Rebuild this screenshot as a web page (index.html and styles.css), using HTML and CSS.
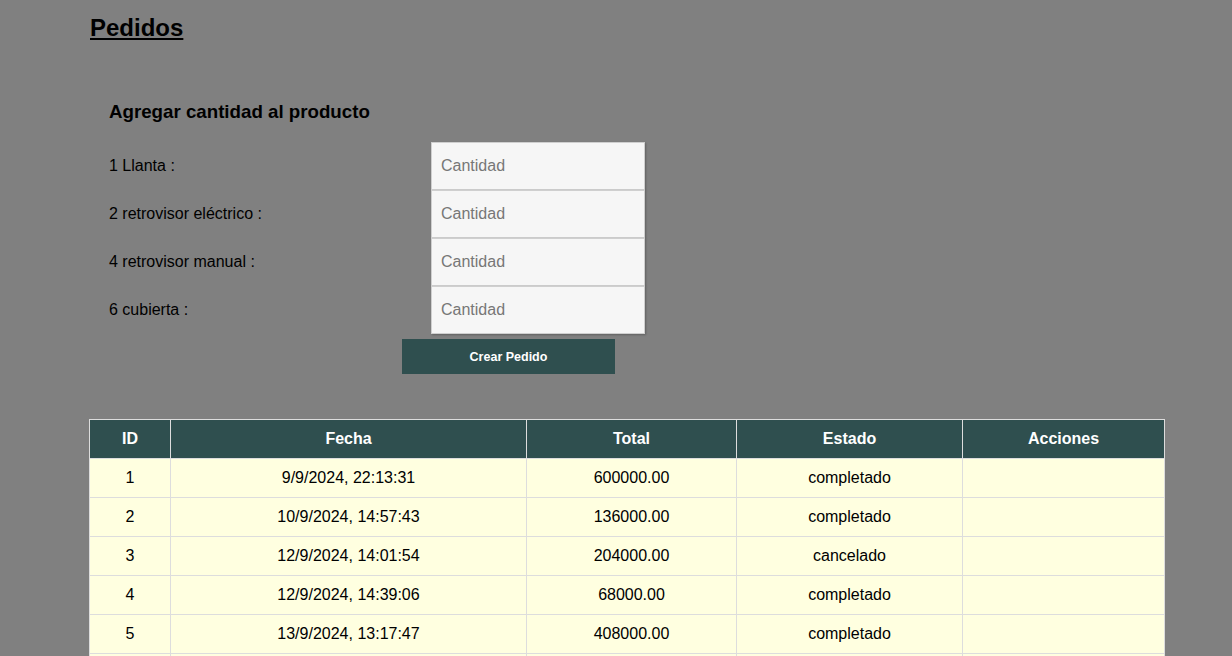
FILE: index.html
```html
<!DOCTYPE html>
<html lang="es">
<head>
<meta charset="utf-8">
<title>Pedidos</title>
<link rel="stylesheet" href="styles.css">
</head>
<body>
<main class="page">
  <h1 class="title">Pedidos</h1>
  <section class="order-form">
    <h2 class="form-title">Agregar cantidad al producto</h2>
    <div class="fields">
      <label class="field-label" for="q1">1 Llanta :</label>
      <input class="qty" id="q1" type="number" placeholder="Cantidad">
      <label class="field-label" for="q2">2 retrovisor eléctrico :</label>
      <input class="qty" id="q2" type="number" placeholder="Cantidad">
      <label class="field-label" for="q4">4 retrovisor manual :</label>
      <input class="qty" id="q4" type="number" placeholder="Cantidad">
      <label class="field-label" for="q6">6 cubierta :</label>
      <input class="qty" id="q6" type="number" placeholder="Cantidad">
    </div>
    <button class="submit" type="button">Crear Pedido</button>
  </section>
  <table class="orders">
    <colgroup>
      <col class="c-id"><col class="c-fecha"><col class="c-total"><col class="c-estado"><col class="c-acc">
    </colgroup>
    <thead>
      <tr><th>ID</th><th>Fecha</th><th>Total</th><th>Estado</th><th>Acciones</th></tr>
    </thead>
    <tbody>
      <tr><td>1</td><td>9/9/2024, 22:13:31</td><td>600000.00</td><td>completado</td><td></td></tr>
      <tr><td>2</td><td>10/9/2024, 14:57:43</td><td>136000.00</td><td>completado</td><td></td></tr>
      <tr><td>3</td><td>12/9/2024, 14:01:54</td><td>204000.00</td><td>cancelado</td><td></td></tr>
      <tr><td>4</td><td>12/9/2024, 14:39:06</td><td>68000.00</td><td>completado</td><td></td></tr>
      <tr><td>5</td><td>13/9/2024, 13:17:47</td><td>408000.00</td><td>completado</td><td></td></tr>
      <tr class="row-cut"><td></td><td></td><td></td><td></td><td></td></tr>
    </tbody>
  </table>
</main>
</body>
</html>
```

FILE: styles.css
```css
html, body {
  margin: 0;
  padding: 0;
  background: #808080;
  font-family: "Liberation Sans", Arial, sans-serif;
  color: #000;
}

.page {
  padding: 12px 0 20px 89px;
}

.title {
  margin: 0;
  padding-left: 1px;
  font-size: 24px;
  font-weight: bold;
  text-decoration: underline;
  line-height: 32px;
}

.order-form {
  padding: 57px 0 0 20px;
}

.form-title {
  margin: 0 0 20px 0;
  font-size: 18.72px;
  font-weight: bold;
  line-height: 21px;
}

.fields {
  display: grid;
  grid-template-columns: 322px 214px;
  grid-auto-rows: 48px;
}

.field-label {
  display: flex;
  align-items: center;
  font-size: 16px;
}

.qty {
  box-sizing: border-box;
  width: 214px;
  height: 48px;
  margin: 0;
  padding: 0 9px;
  border: 1px solid #cfcfcf;
  background: #f6f6f6;
  font-family: "Liberation Sans", Arial, sans-serif;
  font-size: 16px;
  box-shadow: 1px 1px 2px rgba(0, 0, 0, 0.25);
  outline: none;
}

.qty::placeholder {
  color: #777;
}

.submit {
  display: block;
  width: 213px;
  height: 35px;
  margin: 5px 0 0 293px;
  border: none;
  background: #2f4f4f;
  color: #fff;
  font-family: "Liberation Sans", Arial, sans-serif;
  font-size: 12.5px;
  font-weight: bold;
}

.orders {
  margin-top: 45px;
  width: 1075px;
  border-collapse: collapse;
  table-layout: fixed;
  font-size: 16px;
}

.c-id { width: 81px; }
.c-fecha { width: 356px; }
.c-total { width: 210px; }
.c-estado { width: 226px; }
.c-acc { width: 202px; }

.orders th,
.orders td {
  border: 1px solid #dddddd;
  padding: 0 8px;
  height: 38px;
  text-align: center;
  line-height: 18px;
}

.orders th {
  background: #2f4f4f;
  color: #fff;
  font-weight: bold;
}

.orders td {
  background: #ffffe0;
}
```
